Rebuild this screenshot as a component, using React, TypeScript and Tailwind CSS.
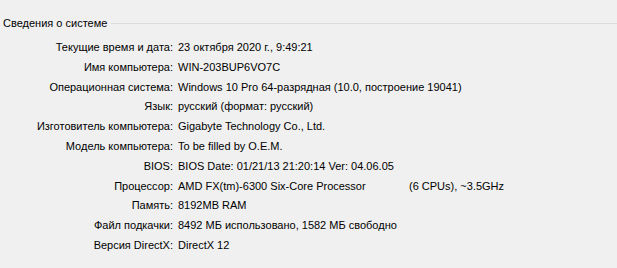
import React from 'react';

const rows: [string, React.ReactNode][] = [
    ['Текущие время и дата:', '23 октября 2020 г., 9:49:21'],
    ['Имя компьютера:', 'WIN-203BUP6VO7C'],
    ['Операционная система:', 'Windows 10 Pro 64-разрядная (10.0, построение 19041)'],
    ['Язык:', 'русский (формат: русский)'],
    ['Изготовитель компьютера:', 'Gigabyte Technology Co., Ltd.'],
    ['Модель компьютера:', 'To be filled by O.E.M.'],
    ['BIOS:', 'BIOS Date: 01/21/13 21:20:14 Ver: 04.06.05'],
    [
        'Процессор:',
        <>
            <span className="inline-block w-[231px]">AMD FX(tm)-6300 Six-Core Processor</span>
            <span>(6 CPUs), ~3.5GHz</span>
        </>,
    ],
    ['Память:', '8192MB RAM'],
    ['Файл подкачки:', '8492 МБ использовано, 1582 МБ свободно'],
    ['Версия DirectX:', 'DirectX 12'],
];

export default function App() {
    return (
        <div className="w-[617px] h-[268px] bg-[#f0f0f0] text-black text-[11px] overflow-hidden font-['Liberation_Sans',sans-serif]">
            {/* Group box header */}
            <div className="flex items-center pt-[14px] pl-[3px]">
                <span className="leading-[18px] whitespace-nowrap">Сведения о системе</span>
                <div className="flex-1 ml-[4px] h-px bg-[#dcdcdc]" />
            </div>

            {/* Info rows */}
            <div className="mt-[6px] flex flex-col">
                {rows.map(([label, value], i) => (
                    <div key={i} className="flex leading-[19.8px] whitespace-nowrap">
                        <div className="w-[173px] text-right shrink-0">{label}</div>
                        <div className="pl-[5px]">{value}</div>
                    </div>
                ))}
            </div>
        </div>
    );
}
